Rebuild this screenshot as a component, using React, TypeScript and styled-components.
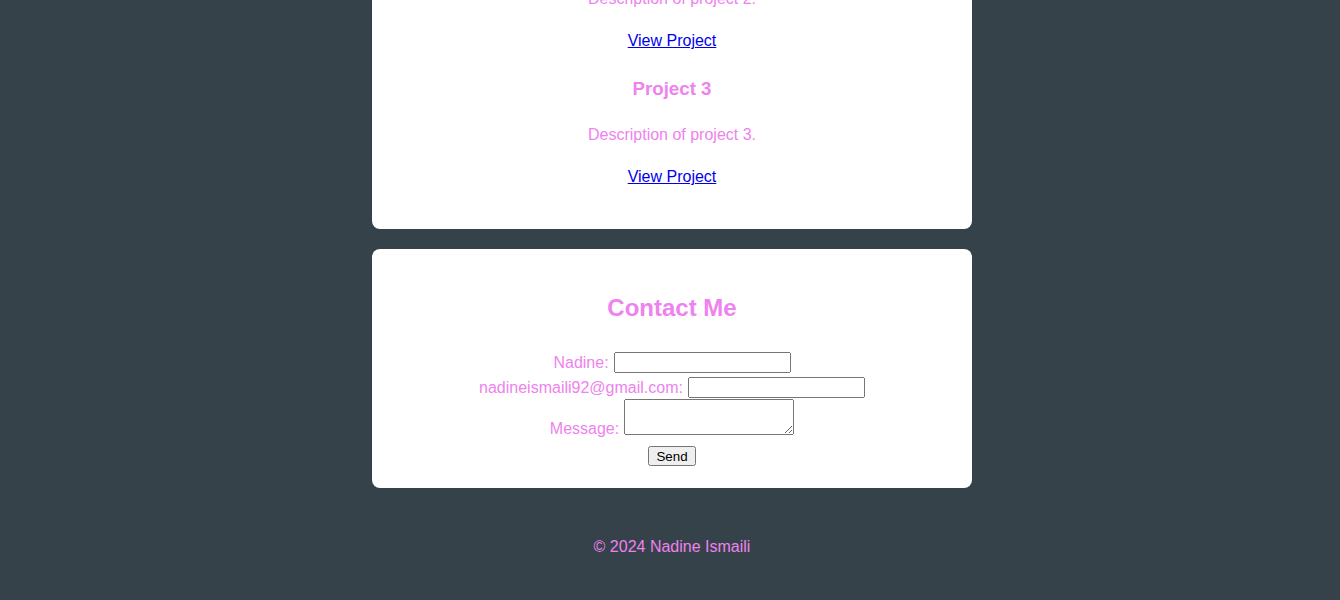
import React from 'react';
import styled, { createGlobalStyle } from 'styled-components';

const projects = [
    { id: 2, title: 'Project 2', description: 'Description of project 2.' },
    { id: 3, title: 'Project 3', description: 'Description of project 3.' },
];

const App: React.FC = () => {
    return (
        <>
            <GlobalStyle />
            <Main>
                <Card $bottom={43}>
                    <ProjectList>
                        {projects.map((project) => (
                            <Project key={project.id}>
                                <ProjectTitle>{project.title}</ProjectTitle>
                                <ProjectDescription>{project.description}</ProjectDescription>
                                <ProjectLink href="#">View Project</ProjectLink>
                            </Project>
                        ))}
                    </ProjectList>
                </Card>
                <Card $bottom={22}>
                    <SectionTitle>Contact Me</SectionTitle>
                    <ContactForm onSubmit={(e) => e.preventDefault()}>
                        <FormRow $gap={30}>
                            <Label htmlFor="name">Nadine:</Label>
                            <TextInput id="name" type="text" />
                        </FormRow>
                        <FormRow $gap={4}>
                            <Label htmlFor="email">nadineismaili92@gmail.com:</Label>
                            <TextInput id="email" type="email" />
                        </FormRow>
                        <FormRow $gap={1} $bottomAligned>
                            <Label htmlFor="message">Message:</Label>
                            <MessageInput id="message" />
                        </FormRow>
                        <FormRow $gap={11}>
                            <SendButton type="submit">Send</SendButton>
                        </FormRow>
                    </ContactForm>
                </Card>
            </Main>
            <Footer>© 2024 Nadine Ismaili</Footer>
        </>
    );
};

const GlobalStyle = createGlobalStyle`
    html, body {
        margin: 0;
        padding: 0;
        background-color: #36424a;
        font-family: "Liberation Sans", Arial, sans-serif;
        font-size: 16px;
        color: violet;
        overflow: hidden;
    }

    body {
        padding-left: 4px;
    }
`;

const Main = styled.main`
    display: flex;
    flex-direction: column;
    align-items: center;
    gap: 20px;
    margin-top: -78px;
`;

const Card = styled.section<{ $bottom: number }>`
    width: 600px;
    box-sizing: border-box;
    background-color: #ffffff;
    border-radius: 8px;
    padding: 20px 20px ${(p) => p.$bottom}px;
    text-align: center;
`;

const ProjectList = styled.div`
    display: flex;
    flex-direction: column;
    gap: 28px;
`;

const Project = styled.article`
    display: flex;
    flex-direction: column;
    align-items: center;
`;

const ProjectTitle = styled.h3`
    margin: 0 0 26px;
    font-size: 18.72px;
    line-height: 22px;
    font-weight: bold;
    color: violet;
`;

const ProjectDescription = styled.p`
    margin: 0 0 24px;
    line-height: 18px;
    color: violet;
`;

const ProjectLink = styled.a`
    line-height: 18px;
    color: #0000ee;
    text-decoration: underline;
`;

const SectionTitle = styled.h2`
    margin: 25px 0 0;
    font-size: 24px;
    line-height: 28px;
    font-weight: bold;
    color: violet;
`;

const ContactForm = styled.form`
    display: flex;
    flex-direction: column;
    align-items: center;
`;

const FormRow = styled.div<{ $gap: number; $bottomAligned?: boolean }>`
    display: flex;
    align-items: ${(p) => (p.$bottomAligned ? 'flex-end' : 'center')};
    justify-content: center;
    gap: 5px;
    margin-top: ${(p) => p.$gap}px;
`;

const Label = styled.label`
    color: violet;
    font-size: 16px;
    line-height: 12px;
`;

const TextInput = styled.input`
    width: 177px;
    height: 21px;
    box-sizing: border-box;
    margin: 0;
    font: 13.333px "Liberation Sans", Arial, sans-serif;
`;

const MessageInput = styled.textarea`
    width: 170px;
    height: 36px;
    box-sizing: border-box;
    margin: 0;
    font: 13.333px "Liberation Mono", monospace;
`;

const SendButton = styled.button`
    height: 20px;
    margin: 0;
    padding: 1px 6px;
    font: 13.333px "Liberation Sans", Arial, sans-serif;
`;

const Footer = styled.footer`
    padding: 50px 0 43px;
    line-height: 18px;
    text-align: center;
    color: violet;
`;

export default App;
